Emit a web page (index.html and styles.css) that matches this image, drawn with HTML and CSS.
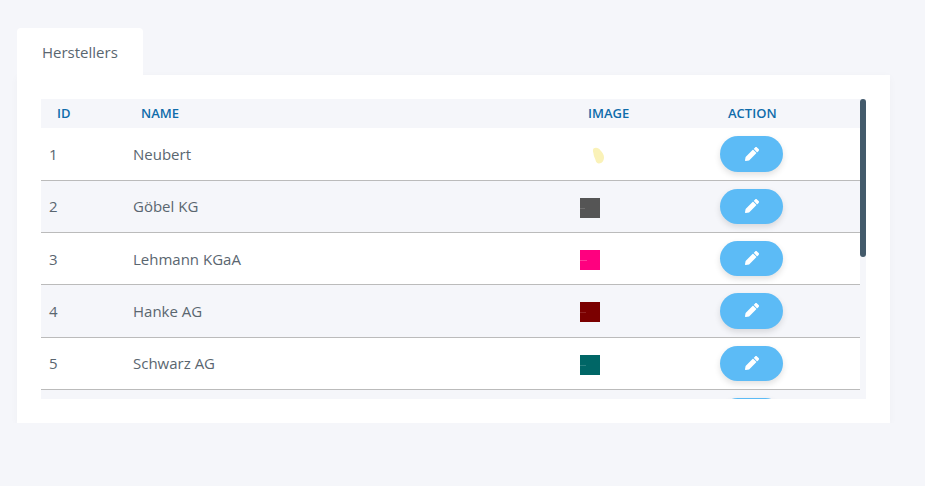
FILE: index.html
```html
<!DOCTYPE html>
<html lang="en">
<head>
  <meta charset="UTF-8">
  <meta name="viewport" content="width=device-width, initial-scale=1.0">
  <title>Herstellers</title>
  <link rel="stylesheet" href="styles.css">
</head>
<body>

  <div class="tabs">
    <div class="tab">Herstellers</div>
  </div>

  <div class="panel">
    <div class="table-wrap">
      <div class="table-scroll">
        <table class="data-table">
          <thead>
            <tr>
              <th class="col-id">ID</th>
              <th class="col-name">Name</th>
              <th class="col-image">Image</th>
              <th class="col-action">Action</th>
            </tr>
          </thead>
          <tbody>
            <tr>
              <td>1</td>
              <td>Neubert</td>
              <td>
                <svg class="thumb" viewBox="0 0 20 20"><path d="M13.500 2.500C16 1 19 2 20.500 4.500C22.500 6 24 9 24 11.500C24 14.500 22 17.500 19 17.500C17 17.500 16 16 15.500 14C15 12 13.500 10 13.500 7.500C13 5.500 12.500 4 13.500 2.500z" fill="#faf2b8"/></svg>
              </td>
              <td><button class="edit-btn"><svg viewBox="0 0 512 512"><path d="M498 142l-46 46c-5 5-12 5-17 0L324 77c-5-5-5-12 0-17l46-46c19-19 49-19 68 0l60 60c19 19 19 49 0 68zM284 100L22 362 0 484c-3 16 11 31 28 28l122-22 262-262c5-5 5-12 0-17L301 100c-5-5-12-5-17 0z"/></svg></button></td>
            </tr>
            <tr>
              <td>2</td>
              <td>Göbel KG</td>
              <td><svg class="thumb" viewBox="0 0 20 20"><rect width="20" height="20" fill="#555555"/><rect y="10" width="5" height="1" fill="#6e6e6e"/></svg></td>
              <td><button class="edit-btn"><svg viewBox="0 0 512 512"><path d="M498 142l-46 46c-5 5-12 5-17 0L324 77c-5-5-5-12 0-17l46-46c19-19 49-19 68 0l60 60c19 19 19 49 0 68zM284 100L22 362 0 484c-3 16 11 31 28 28l122-22 262-262c5-5 5-12 0-17L301 100c-5-5-12-5-17 0z"/></svg></button></td>
            </tr>
            <tr>
              <td>3</td>
              <td>Lehmann KGaA</td>
              <td><svg class="thumb" viewBox="0 0 20 20"><rect width="20" height="20" fill="#ff007f"/><rect y="10" width="7" height="1" fill="#ff3d9b"/></svg></td>
              <td><button class="edit-btn"><svg viewBox="0 0 512 512"><path d="M498 142l-46 46c-5 5-12 5-17 0L324 77c-5-5-5-12 0-17l46-46c19-19 49-19 68 0l60 60c19 19 19 49 0 68zM284 100L22 362 0 484c-3 16 11 31 28 28l122-22 262-262c5-5 5-12 0-17L301 100c-5-5-12-5-17 0z"/></svg></button></td>
            </tr>
            <tr>
              <td>4</td>
              <td>Hanke AG</td>
              <td><svg class="thumb" viewBox="0 0 20 20"><rect width="20" height="20" fill="#7b0000"/><rect y="10" width="6" height="1" fill="#8f2222"/></svg></td>
              <td><button class="edit-btn"><svg viewBox="0 0 512 512"><path d="M498 142l-46 46c-5 5-12 5-17 0L324 77c-5-5-5-12 0-17l46-46c19-19 49-19 68 0l60 60c19 19 19 49 0 68zM284 100L22 362 0 484c-3 16 11 31 28 28l122-22 262-262c5-5 5-12 0-17L301 100c-5-5-12-5-17 0z"/></svg></button></td>
            </tr>
            <tr>
              <td>5</td>
              <td>Schwarz AG</td>
              <td><svg class="thumb" viewBox="0 0 20 20"><rect width="20" height="20" fill="#006666"/><rect y="10" width="6" height="1" fill="#2a8080"/></svg></td>
              <td><button class="edit-btn"><svg viewBox="0 0 512 512"><path d="M498 142l-46 46c-5 5-12 5-17 0L324 77c-5-5-5-12 0-17l46-46c19-19 49-19 68 0l60 60c19 19 19 49 0 68zM284 100L22 362 0 484c-3 16 11 31 28 28l122-22 262-262c5-5 5-12 0-17L301 100c-5-5-12-5-17 0z"/></svg></button></td>
            </tr>
            <tr>
              <td></td>
              <td></td>
              <td></td>
              <td><button class="edit-btn"></button></td>
            </tr>
          </tbody>
        </table>
      </div>
      <div class="scrollbar"><div class="scrollbar-thumb"></div></div>
    </div>
  </div>

</body>
</html>
```

FILE: styles.css
```css
body {
  font-family: "Open Sans", sans-serif;
  margin: 0;
  padding: 28px 35px 0 17px;
  background-color: #f5f6fa;
  color: #5a6670;
  font-size: 15px;
}

.tabs {
  display: flex;
}

.tab {
  width: 126px;
  height: 47px;
  box-sizing: border-box;
  padding-left: 25px;
  line-height: 49px;
  background-color: #fff;
  border-radius: 4px 4px 0 0;
}

.panel {
  background-color: #fff;
  padding: 24px;
  height: 348px;
  box-sizing: border-box;
  box-shadow: 0 2px 8px rgba(0, 0, 0, 0.03);
}

.table-wrap {
  position: relative;
  height: 300px;
}

.table-scroll {
  height: 100%;
  overflow: hidden;
}

/* the browser hides real scrollbars here, so this one is drawn over the table */
.scrollbar {
  position: absolute;
  top: 0;
  right: 0;
  bottom: 0;
  width: 6px;
  background-color: #f5f6fa;
}

.scrollbar-thumb {
  height: 158px;
  background-color: #435a6b;
  border-radius: 3px;
}

.data-table {
  width: 819px;
  table-layout: fixed;
  border-collapse: collapse;
}

.data-table th {
  height: 29.4px;
  box-sizing: border-box;
  padding: 0 0 1px 16px;
  text-align: left;
  font-size: 13px;
  font-weight: 600;
  text-transform: uppercase;
  color: #0f6cab;
  background-color: #f5f6fa;
}

.col-id {
  width: 84px;
}

.col-image {
  width: 140px;
}

.col-action {
  width: 148px;
}

.data-table td {
  padding: 8px;
  border-bottom: 1px solid #bbb;
}

.data-table tbody tr:nth-child(even) td {
  background-color: #f5f6fa;
}

.thumb {
  display: block;
  width: 20px;
  height: 20px;
  margin-top: 3px;
  overflow: visible;
}

.edit-btn {
  display: block;
  width: 63px;
  height: 35.3px;
  padding: 0;
  border: none;
  border-radius: 18px;
  background-color: #5cbbf6;
  box-shadow: 0 3px 6px rgba(0, 0, 0, 0.12);
  cursor: pointer;
}

.edit-btn svg {
  display: block;
  width: 14px;
  height: 14px;
  margin: 0 auto 1px;
  fill: #fff;
}
```
